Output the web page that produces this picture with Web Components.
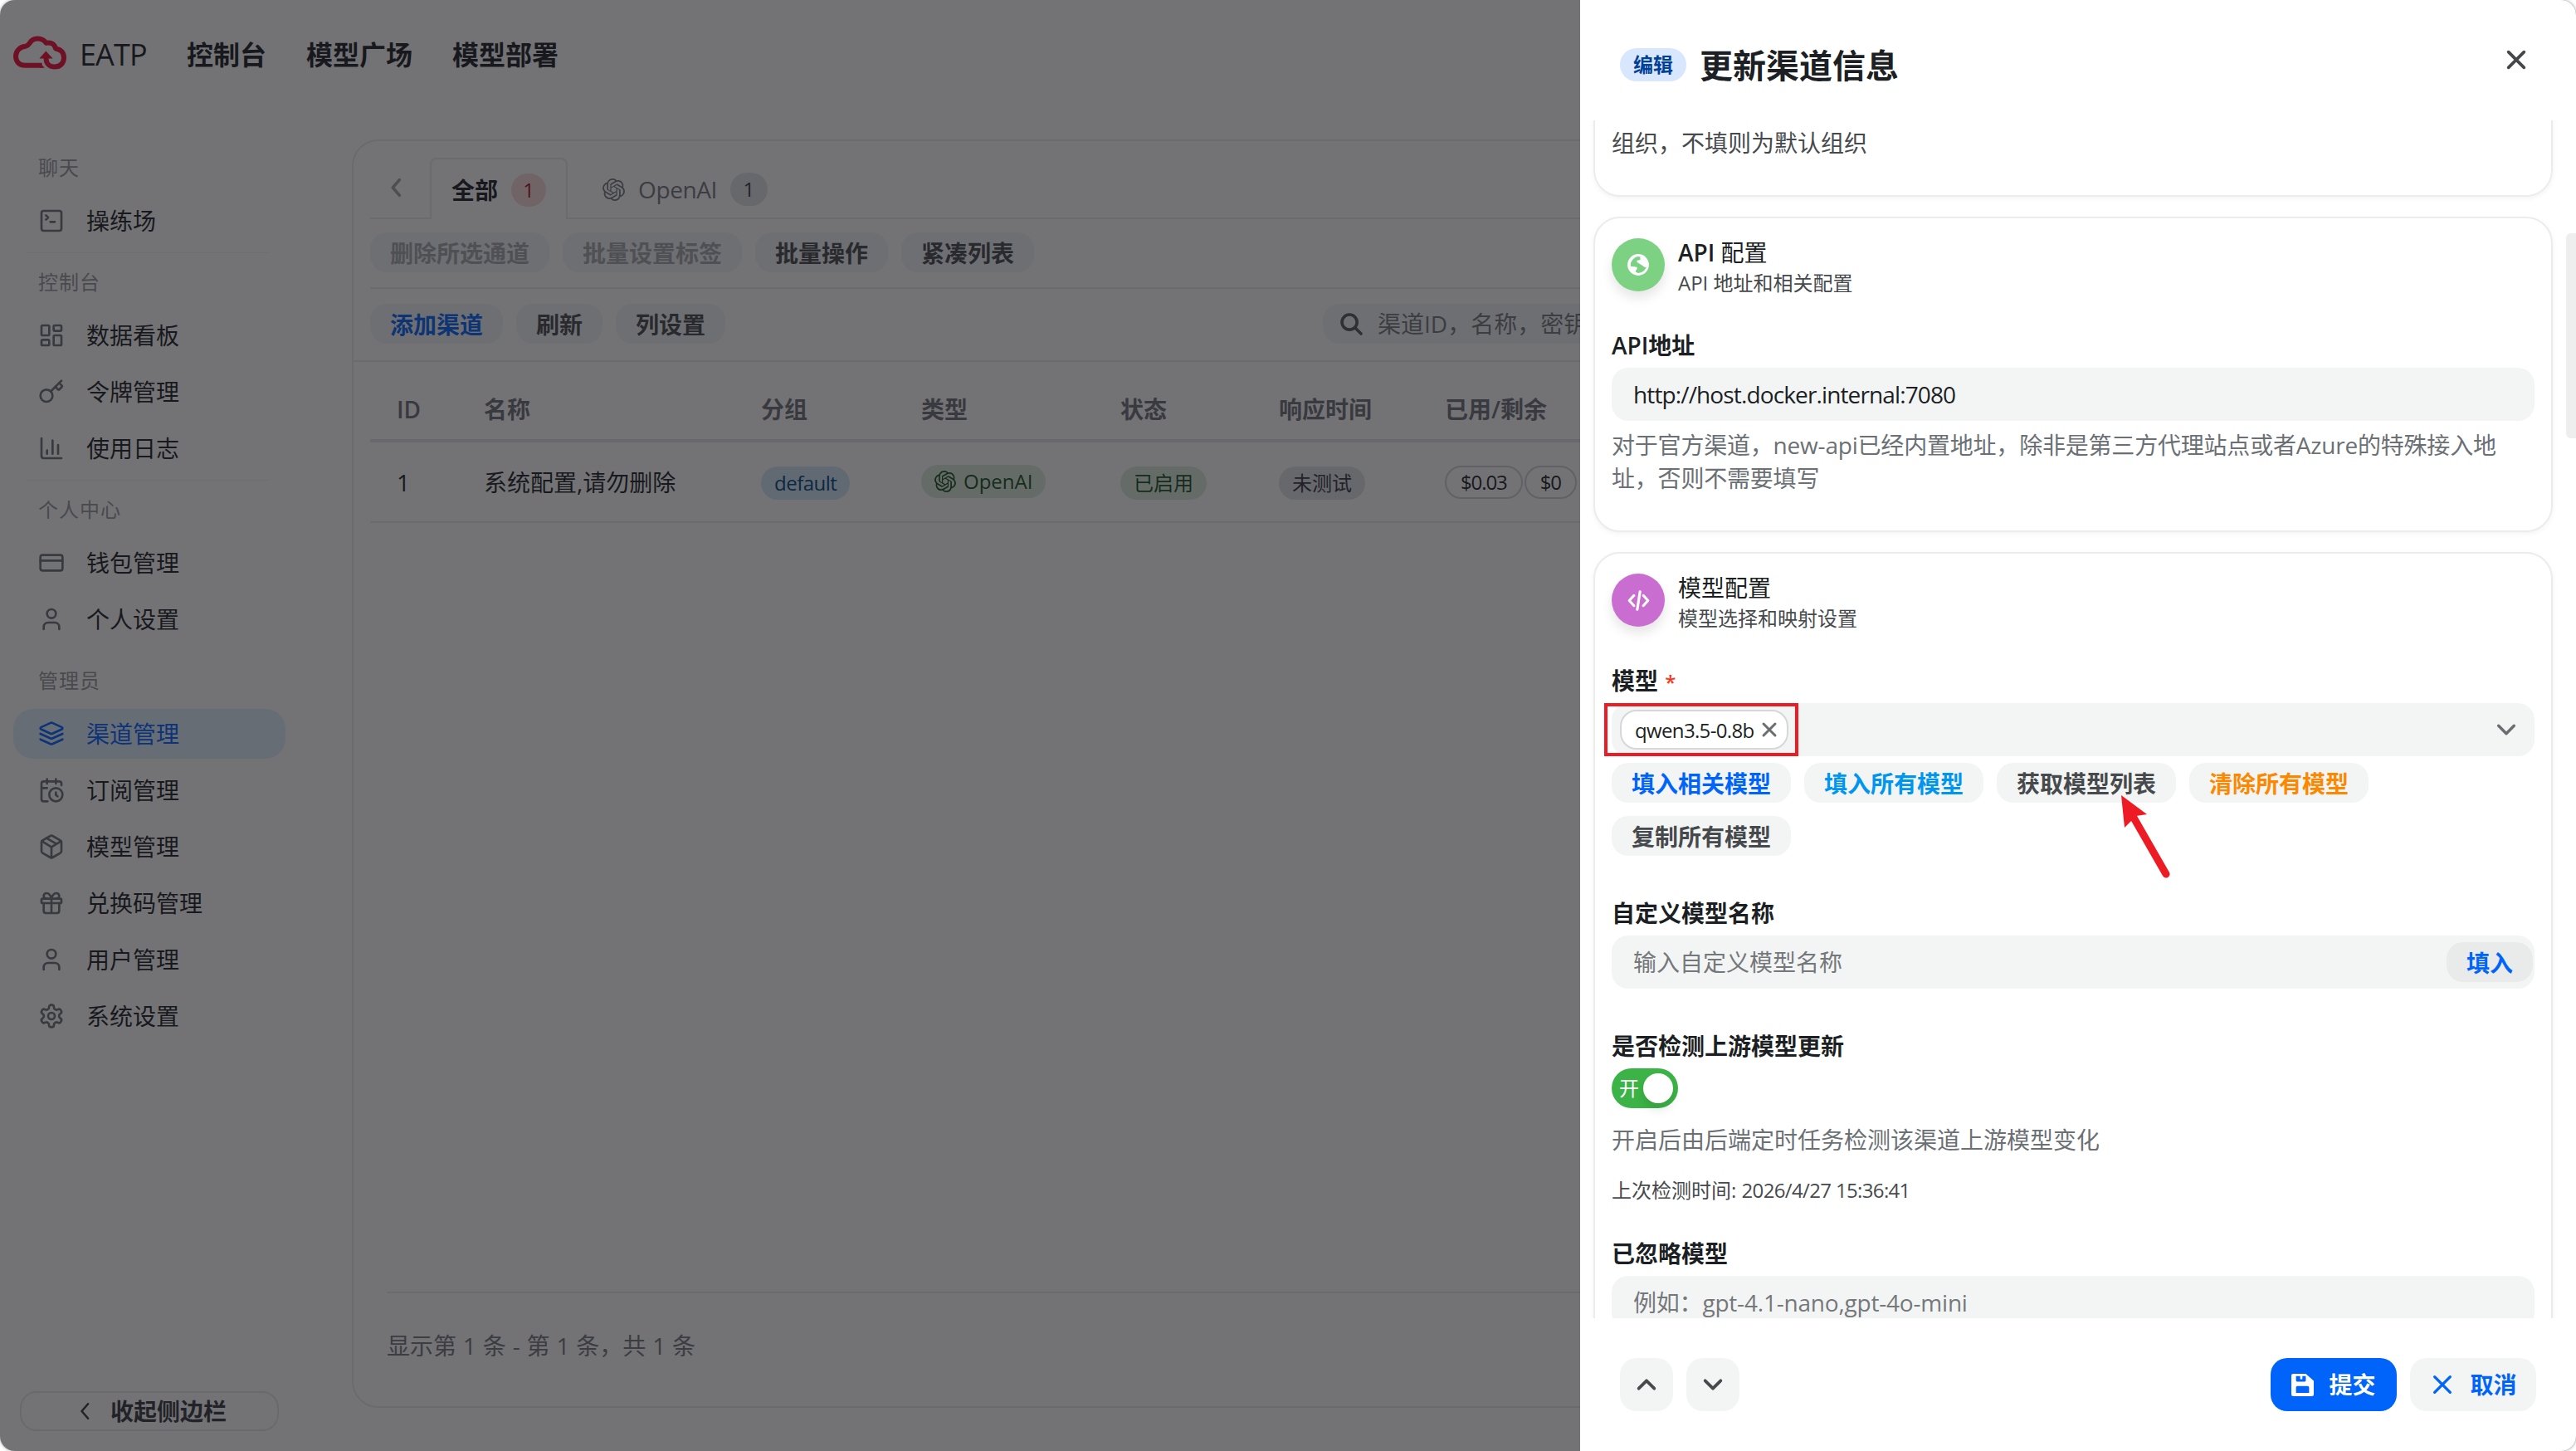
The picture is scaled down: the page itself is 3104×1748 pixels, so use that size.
<!DOCTYPE html>
<html lang="zh-CN">
<head>
<meta charset="utf-8">
<title>EATP</title>
<style>
  html, body {
    margin: 0;
    background: #fff;
  }

  body {
    font-family: "Open Sans", "Noto Sans CJK SC", sans-serif;
    font-size: 28px;
    line-height: 40px;
    color: #1c1f23;
  }
</style>
</head>
<body>
<eatp-app></eatp-app>

<script>
const OPENAI = '<path fill="currentColor" stroke="none" d="M22.2819 9.8211a5.9847 5.9847 0 0 0-.5157-4.9108 6.0462 6.0462 0 0 0-6.5098-2.9A6.0651 6.0651 0 0 0 4.9807 4.1818a5.9847 5.9847 0 0 0-3.9977 2.9 6.0462 6.0462 0 0 0 .7427 7.0966 5.98 5.98 0 0 0 .511 4.9107 6.051 6.051 0 0 0 6.5146 2.9001A5.9847 5.9847 0 0 0 13.2599 24a6.0557 6.0557 0 0 0 5.7718-4.2058 5.9894 5.9894 0 0 0 3.9977-2.9001 6.0557 6.0557 0 0 0-.7475-7.0729zm-9.022 12.6081a4.4755 4.4755 0 0 1-2.8764-1.0408l.1419-.0804 4.7783-2.7582a.7948.7948 0 0 0 .3927-.6813v-6.7369l2.02 1.1686a.071.071 0 0 1 .038.052v5.5826a4.504 4.504 0 0 1-4.4945 4.4944zm-9.6607-4.1254a4.4708 4.4708 0 0 1-.5346-3.0137l.142.0852 4.783 2.7582a.7712.7712 0 0 0 .7806 0l5.8428-3.3685v2.3324a.0804.0804 0 0 1-.0332.0615L9.74 19.9502a4.4992 4.4992 0 0 1-6.1408-1.6464zM2.3408 7.8956a4.485 4.485 0 0 1 2.3655-1.9728V11.6a.7664.7664 0 0 0 .3879.6765l5.8144 3.3543-2.0201 1.1685a.0757.0757 0 0 1-.071 0l-4.8303-2.7865A4.504 4.504 0 0 1 2.3408 7.872zm16.5963 3.8558L13.1038 8.364 15.1192 7.2a.0757.0757 0 0 1 .071 0l4.8303 2.7913a4.4944 4.4944 0 0 1-.6765 8.1042v-5.6772a.79.79 0 0 0-.407-.667zm2.0107-3.0231l-.142-.0852-4.7735-2.7818a.7759.7759 0 0 0-.7854 0L9.409 9.2297V6.8974a.0662.0662 0 0 1 .0284-.0615l4.8303-2.7866a4.4992 4.4992 0 0 1 6.6802 4.66zM8.3065 12.863l-2.02-1.1638a.0804.0804 0 0 1-.038-.0567V6.0742a4.4992 4.4992 0 0 1 7.3757-3.4537l-.142.0805L8.704 5.459a.7948.7948 0 0 0-.3927.6813zm1.0976-2.3654l2.602-1.4998 2.6069 1.4998v2.9994l-2.5974 1.4997-2.6067-1.4997Z"/>';

// 24x24 icons, stroked with currentColor unless they say otherwise
const ICONS = {
  terminal: '<rect x="3" y="3" width="18" height="18" rx="2"/><path d="m7 11 2-2-2-2M11 13h4"/>',
  dashboard: '<rect x="3" y="3" width="7" height="9" rx="1"/><rect x="14" y="3" width="7" height="5" rx="1"/><rect x="14" y="12" width="7" height="9" rx="1"/><rect x="3" y="16" width="7" height="5" rx="1"/>',
  key: '<path d="m15.5 7.5 2.3 2.3a1 1 0 0 0 1.4 0l2.1-2.1a1 1 0 0 0 0-1.4L19 4"/><path d="m21 2-9.6 9.6"/><circle cx="7.5" cy="15.5" r="5.5"/>',
  chart: '<path d="M3 3v16a2 2 0 0 0 2 2h16M18 17V9M13 17V5M8 17v-3"/>',
  card: '<rect x="2" y="5" width="20" height="14" rx="2"/><path d="M2 10h20"/>',
  user: '<path d="M19 21v-2a4 4 0 0 0-4-4H9a4 4 0 0 0-4 4v2"/><circle cx="12" cy="7" r="4"/>',
  layers: '<path d="m12.83 2.18a2 2 0 0 0-1.66 0L2.6 6.08a1 1 0 0 0 0 1.83l8.58 3.91a2 2 0 0 0 1.66 0l8.58-3.9a1 1 0 0 0 0-1.83Z"/><path d="m22 12-9.17 4.17a2 2 0 0 1-1.66 0L2 12M22 17l-9.17 4.17a2 2 0 0 1-1.66 0L2 17"/>',
  calendar: '<path d="M21 7.5V6a2 2 0 0 0-2-2H5a2 2 0 0 0-2 2v14a2 2 0 0 0 2 2h3.500M16 2v4M8 2v4M3 10h5M17.500 17.500 16 16.300V14"/><circle cx="16" cy="16" r="6"/>',
  box: '<path d="M11 21.730a2 2 0 0 0 2 0l7-4A2 2 0 0 0 21 16V8a2 2 0 0 0-1-1.730l-7-4a2 2 0 0 0-2 0l-7 4A2 2 0 0 0 3 8v8a2 2 0 0 0 1 1.730zM12 22V12"/><path d="m3.300 7 7.703 4.734a2 2 0 0 0 1.994 0L20.700 7M7.500 4.270l9 5.150"/>',
  gift: '<rect x="3" y="8" width="18" height="4" rx="1"/><path d="M12 8v13M19 12v7a2 2 0 0 1-2 2H7a2 2 0 0 1-2-2v-7M7.500 8a2.500 2.500 0 0 1 0-5A4.800 8 0 0 1 12 8a4.800 8 0 0 1 4.500-5 2.500 2.500 0 0 1 0 5"/>',
  gear: '<path d="M12.220 2h-.44a2 2 0 0 0-2 2v.18a2 2 0 0 1-1 1.730l-.43.25a2 2 0 0 1-2 0l-.15-.08a2 2 0 0 0-2.730.73l-.22.38a2 2 0 0 0 .73 2.730l.15.1a2 2 0 0 1 1 1.720v.51a2 2 0 0 1-1 1.740l-.15.09a2 2 0 0 0-.73 2.730l.22.38a2 2 0 0 0 2.730.73l.15-.08a2 2 0 0 1 2 0l.43.25a2 2 0 0 1 1 1.730V20a2 2 0 0 0 2 2h.44a2 2 0 0 0 2-2v-.18a2 2 0 0 1 1-1.730l.43-.25a2 2 0 0 1 2 0l.15.08a2 2 0 0 0 2.730-.73l.22-.39a2 2 0 0 0-.73-2.730l-.15-.08a2 2 0 0 1-1-1.740v-.5a2 2 0 0 1 1-1.740l.15-.09a2 2 0 0 0 .73-2.730l-.22-.38a2 2 0 0 0-2.730-.73l-.15.08a2 2 0 0 1-2 0l-.43-.25a2 2 0 0 1-1-1.730V4a2 2 0 0 0-2-2z"/><circle cx="12" cy="12" r="3"/>',
  left: '<path d="M15.500 4.500 9 12l6.500 7.500"/>',
  up: '<path d="m5 15.500 7-7 7 7"/>',
  down: '<path d="m5 8.500 7 7 7-7"/>',
  close: '<path d="m5 5 14 14M19 5 5 19"/>',
  search: '<circle cx="10" cy="10" r="7.500"/><path d="m15.500 15.500 6 6"/>',
  openai: OPENAI,
  code: '<path d="m7 6.500-5 5.500 5 5.500M17 6.500l5 5.500-5 5.500M13.500 2.500l-3 19"/>',
  save: '<path fill="currentColor" stroke="none" fill-rule="evenodd" d="M2 0h13.500L24 7.500V22a2 2 0 0 1-2 2H2a2 2 0 0 1-2-2V2a2 2 0 0 1 2-2zM5 2.500V7a1.500 1.500 0 0 0 1.500 1.500h7.500A1.500 1.500 0 0 0 15.500 7V2.500h-3.700v3.300H9.500V2.500zM6.500 13A1.500 1.500 0 0 0 5 14.500v6h14v-6a1.500 1.500 0 0 0-1.500-1.500z"/>',
  globe: '<circle cx="12" cy="12" r="10.600" stroke-width="2.600"/><path fill="currentColor" stroke="none" d="M13.500 1.500C9 2.500 5 6 3.500 10.500v3.200l5.800.6c1.400.2 1.900 1.400 1.300 2.500l-1.300 1.700c-.6 1.300.5 2 1.700 2.300l.4 1.900A11 11 0 0 1 1.200 12C1.200 5.500 6.500 1 13.500 1.500zM14 3.500l.5 2.200c-.3 1-1.700 1-3 1.300-1.200.4-1.200 1.400-.6 2.200l5.500 3.500c1.500 1.200 2.100 1.900 3.600 2l2.300-1C23 8 19 3 14 3.500z"/>',
};

class UiIcon extends HTMLElement {
  constructor() {
    super();
    this.attachShadow({ mode: "open" });
  }

  connectedCallback() {
    const size = this.getAttribute("size") || 32;
    const stroke = this.getAttribute("stroke") || 2;
    this.shadowRoot.innerHTML = /*html*/`
      <style>
        :host { display: block; flex: none; width: ${size}px; height: ${size}px; }
        svg { display: block; width: 100%; height: 100%; overflow: visible; }
      </style>
      <svg viewBox="0 0 24 24" fill="none" stroke="currentColor" stroke-width="${stroke}"
        stroke-linecap="round" stroke-linejoin="round">${ICONS[this.getAttribute("name")]}</svg>`;
  }
}
customElements.define("ui-icon", UiIcon);

// Registers an element whose shadow root is a plain clone of the markup.
function define(name, html) {
  const template = document.createElement("template");
  template.innerHTML = html;
  customElements.define(name, class extends HTMLElement {
    constructor() {
      super();
      this.attachShadow({ mode: "open" });
      this.shadowRoot.appendChild(template.content.cloneNode(true));
    }
  });
}

define("ui-button", /*html*/`
  <style>
    :host {
      display: flex;
      align-items: center;
      justify-content: center;
      box-sizing: border-box;
      flex: none;
      height: 48px;
      padding: 2px 24px 0;
      border-radius: 20px;
      background: #f3f5f5;
      color: #474a4d;
      font-weight: 700;
      white-space: nowrap;
    }
    :host([color="primary"]) { color: #0064fa; }
    :host([color="secondary"]) { color: #0095ee; }
    :host([color="warning"]) { color: #fc8800; }
    :host([disabled]) { color: #a6a8aa; }
    :host([size="large"]) { height: 64px; width: 152px; padding: 0; gap: 17px; }
    :host([size="square"]) { height: 64px; width: 64px; padding: 0; }
    :host([solid]) { background: #0064fa; color: #fff; gap: 18px; }
  </style>
  <slot></slot>`);

define("ui-tag", /*html*/`
  <style>
    :host {
      display: inline-flex;
      align-items: center;
      box-sizing: border-box;
      height: 40px;
      padding: 0 16px;
      gap: 9px;
      border-radius: 20px;
      font-size: 24px;
      white-space: nowrap;
      background: #e1e3e7;
      color: #35383c;
    }
    :host([color="blue"]) { background: #d3e8f6; color: #00457a; letter-spacing: -0.5px; }
    :host([color="green"]) { background: #dbeddd; color: #174f1f; }
    :host([color="red"]) { background: #fadad7; color: #a80d12; padding: 0; width: 42px; justify-content: center; }
    :host([color="count"]) { padding: 0; width: 45px; justify-content: center; }
    :host([color="outline"]) { background: none; border: 2px solid #d0d2d5; color: #1c1f23; padding: 0 17px; letter-spacing: -1.1px; }
    :host([color="edit"]) { background: #d8e6fe; color: #004097; font-weight: 700; }
  </style>
  <slot></slot>`);

define("top-nav", /*html*/`
  <style>
    :host {
      display: flex;
      align-items: center;
      flex: none;
      height: 132px;
      padding-left: 16px;
      font-size: 32px;
      font-weight: 700;
    }
    svg { width: 64px; height: 41px; margin-top: -6px; }
    .brand { width: 129px; margin-left: 16px; font-size: 36px; font-weight: 500; letter-spacing: -0.9px; }
    nav { display: flex; gap: 48px; }
  </style>
  <svg viewBox="24 37 192 122" fill="none" stroke="#f40a36">
    <path stroke-width="18" stroke-linejoin="round" d="M128 144H66C44 144 33 128 33 111C33 92 47 77 68 75C76 73 79 70 83 64C89 53 99 47 112 47C126 47 136 53 143 63C162 59 174 68 177 83C196 86 207 98 207 116C207 136 193 149 174 149C156 149 143 138 143 122V108"/>
    <path stroke="none" fill="#f40a36" d="M142 92l25 27h-49zM120 135l18 18h-18z"/>
  </svg>
  <div class="brand">EATP</div>
  <nav><span>控制台</span><span>模型广场</span><span>模型部署</span></nav>`);

define("nav-section", /*html*/`
  <style>
    :host { display: block; }
    :host([divided]) { margin-bottom: 17px; }
    :host([divided])::after {
      content: "";
      display: block;
      height: 1px;
      margin: 8px 20px 0 16px;
      background: #f2f2f3;
    }
    :host([spaced]) { margin-bottom: 26px; }
    h4 {
      margin: 0 0 16px 30px;
      font-size: 24px;
      font-weight: 400;
      line-height: 36px;
      letter-spacing: 1px;
      color: #97989a;
    }
    .items { display: flex; flex-direction: column; gap: 8px; }
  </style>
  <h4><slot name="label"></slot></h4>
  <div class="items"><slot></slot></div>`);

define("nav-item", /*html*/`
  <style>
    :host {
      display: flex;
      align-items: center;
      gap: 26px;
      height: 60px;
      padding-left: 30px;
      border-radius: 24px;
    }
    :host([active]) { background: #e1effc; color: #0062ff; }
    ::slotted(ui-icon) { color: #6b7075; }
    :host([active]) ::slotted(ui-icon) { color: #0062ff; }
  </style>
  <slot></slot>`);

define("side-nav", /*html*/`
  <style>
    :host {
      display: flex;
      flex-direction: column;
      box-sizing: border-box;
      flex: none;
      width: 424px;
      padding: 52px 80px 24px 16px;
    }
    .collapse {
      display: flex;
      align-items: center;
      justify-content: center;
      gap: 17px;
      box-sizing: border-box;
      height: 48px;
      margin: auto 8px 0;
      padding-left: 1px;
      border: 2px solid #e8e9ea;
      border-radius: 20px;
      color: #35383c;
      font-weight: 700;
    }
  </style>
  <nav-section divided>
    <span slot="label">聊天</span>
    <nav-item><ui-icon name="terminal"></ui-icon>操练场</nav-item>
  </nav-section>
  <nav-section divided>
    <span slot="label">控制台</span>
    <nav-item><ui-icon name="dashboard"></ui-icon>数据看板</nav-item>
    <nav-item><ui-icon name="key"></ui-icon>令牌管理</nav-item>
    <nav-item><ui-icon name="chart"></ui-icon>使用日志</nav-item>
  </nav-section>
  <nav-section spaced>
    <span slot="label">个人中心</span>
    <nav-item><ui-icon name="card"></ui-icon>钱包管理</nav-item>
    <nav-item><ui-icon name="user"></ui-icon>个人设置</nav-item>
  </nav-section>
  <nav-section>
    <span slot="label">管理员</span>
    <nav-item active><ui-icon name="layers"></ui-icon>渠道管理</nav-item>
    <nav-item><ui-icon name="calendar"></ui-icon>订阅管理</nav-item>
    <nav-item><ui-icon name="box"></ui-icon>模型管理</nav-item>
    <nav-item><ui-icon name="gift"></ui-icon>兑换码管理</nav-item>
    <nav-item><ui-icon name="user"></ui-icon>用户管理</nav-item>
    <nav-item><ui-icon name="gear"></ui-icon>系统设置</nav-item>
  </nav-section>
  <div class="collapse"><ui-icon name="left" size="28" stroke="2.2"></ui-icon>收起侧边栏</div>`);

define("channel-tabs", /*html*/`
  <style>
    :host { display: flex; height: 74px; color: #75787c; }
    div {
      display: flex;
      align-items: center;
      box-sizing: border-box;
      border-bottom: 2px solid #e9eaeb;
    }
    .prev { width: 72px; padding-left: 16px; color: #a0a2a4; }
    .tab { padding: 4px 24px 0 42px; }
    .active {
      padding: 2px 24px 0;
      gap: 16px;
      border: 2px solid #e9eaeb;
      border-bottom: 0;
      border-radius: 8px 8px 0 0;
      color: #1c1f23;
      font-weight: 700;
    }
    .active ui-tag { font-weight: 500; }
    .tab span { margin: 0 16px 0 16px; letter-spacing: -0.4px; }
    .rest { flex: 1; }
  </style>
  <div class="prev"><ui-icon name="left" size="30" stroke="2.8"></ui-icon></div>
  <div class="active">全部<ui-tag color="red">1</ui-tag></div>
  <div class="tab"><ui-icon name="openai" size="27"></ui-icon><span>OpenAI</span><ui-tag color="count">1</ui-tag></div>
  <div class="rest"></div>`);

define("channel-table", /*html*/`
  <style>
    :host { display: block; margin: 20px 0 0 20px; }
    .row {
      display: grid;
      grid-template-columns: 105px 334px 193px 240px 191px 200px 1fr;
      align-items: center;
      height: 95px;
      border-bottom: 2px solid #e9eaeb;
    }
    .row > * { padding-left: 32px; white-space: nowrap; }
    .head {
      height: 73px;
      border-bottom: 4px solid #e6e7e8;
      color: #6f7275;
      font-weight: 600;
    }
    .quota { display: flex; gap: 2px; }
  </style>
  <div class="row head">
    <span>ID</span><span>名称</span><span>分组</span><span>类型</span><span>状态</span><span>响应时间</span><span>已用/剩余</span>
  </div>
  <div class="row">
    <span>1</span>
    <span>系统配置,请勿删除</span>
    <span><ui-tag color="blue">default</ui-tag></span>
    <span><ui-tag color="green"><ui-icon name="openai" size="26"></ui-icon>OpenAI</ui-tag></span>
    <span><ui-tag color="green">已启用</ui-tag></span>
    <span><ui-tag>未测试</ui-tag></span>
    <span class="quota"><ui-tag color="outline">$0.03</ui-tag><ui-tag color="outline">$0</ui-tag></span>
  </div>`);

define("channel-card", /*html*/`
  <style>
    :host {
      display: flex;
      flex-direction: column;
      box-sizing: border-box;
      flex: 1;
      margin: 36px 16px 52px 0;
      border: 2px solid #e9eaeb;
      border-radius: 32px;
    }
    channel-tabs { margin: 20px 20px 0; }
    .bar { display: flex; gap: 16px; margin: 0 20px; }
    .batch { padding: 16px 0 18px; border-bottom: 2px solid #e9eaeb; }
    .tools { padding: 18px 0 20px; }
    .tools + hr { width: 100%; height: 2px; margin: 0; border: 0; background: #e9eaeb; }
    .search {
      display: flex;
      align-items: center;
      gap: 17px;
      width: 560px;
      height: 48px;
      margin-left: 704px;
      padding-left: 20px;
      border-radius: 20px;
      background: #f3f5f5;
      color: #75787c;
    }
    .search ui-icon { color: #54575a; }
    footer {
      height: 126px;
      padding-bottom: 10px;
      margin: auto 40px 0;
      border-top: 2px solid #e9eaeb;
      line-height: 126px;
      word-spacing: 0.6px;
      color: #75787b;
    }
  </style>
  <channel-tabs></channel-tabs>
  <div class="bar batch">
    <ui-button disabled>删除所选通道</ui-button>
    <ui-button disabled>批量设置标签</ui-button>
    <ui-button>批量操作</ui-button>
    <ui-button>紧凑列表</ui-button>
  </div>
  <div class="bar tools">
    <ui-button color="primary">添加渠道</ui-button>
    <ui-button>刷新</ui-button>
    <ui-button>列设置</ui-button>
    <div class="search"><ui-icon name="search" size="29" stroke="3"></ui-icon>渠道ID，名称，密钥</div>
  </div>
  <hr>
  <channel-table></channel-table>
  <footer>显示第 1 条 - 第 1 条，共 1 条</footer>`);

define("form-card", /*html*/`
  <style>
    :host {
      display: block;
      box-sizing: border-box;
      flex: none;
      padding: 24px 20px;
      border: 2px solid #ebecec;
      border-radius: 32px;
      box-shadow: 0 2px 6px rgba(0, 0, 0, .05);
      background: #fff;
    }
    header { display: flex; gap: 16px; height: 64px; }
    .avatar {
      display: flex;
      align-items: center;
      justify-content: center;
      width: 64px;
      height: 64px;
      border-radius: 50%;
      background: var(--avatar);
      color: #fff;
      box-shadow: 0 8px 14px rgba(0, 0, 0, .1);
    }
    .title { margin-top: -3px; }
    .note { margin-top: -1px; font-size: 24px; line-height: 36px; color: #474a4d; }
  </style>
  <header>
    <div class="avatar"><slot name="icon"></slot></div>
    <div>
      <div class="title"><slot name="title"></slot></div>
      <div class="note"><slot name="note"></slot></div>
    </div>
  </header>
  <slot></slot>`);

define("form-field", /*html*/`
  <style>
    :host { display: block; }
    label { display: block; height: 40px; margin-bottom: 7px; font-weight: 600; }
    :host([required]) label::after { content: " *"; font-size: 24px; line-height: 1; color: #f93920; white-space: pre; margin-left: 2px; }
    .help { color: #6b7075; }
  </style>
  <label><slot name="label"></slot></label>
  <slot></slot>
  <div class="help"><slot name="help"></slot></div>`);

define("text-box", /*html*/`
  <style>
    :host {
      display: flex;
      align-items: center;
      justify-content: space-between;
      box-sizing: border-box;
      height: 64px;
      padding: 0 2px 0 26px;
      border-radius: 20px;
      background: #f3f5f5;
    }
    :host([placeholder]) { color: #75787a; }
    ::slotted(ui-button) { background: #e9ebeb; }
  </style>
  <slot></slot>`);

define("model-select", /*html*/`
  <style>
    :host {
      display: flex;
      align-items: center;
      justify-content: space-between;
      position: relative;
      box-sizing: border-box;
      height: 64px;
      padding: 0 18px 0 10px;
      border-radius: 20px;
      background: #f3f5f5;
      color: #6b6e71;
    }
    .tag {
      display: flex;
      align-items: center;
      box-sizing: border-box;
      width: 203px;
      height: 48px;
      padding: 0 9px 0 16px;
      justify-content: space-between;
      border: 2px solid #d5d7da;
      border-radius: 20px;
      background: #fff;
      font-size: 24px;
    }
    .tag span { padding-top: 2px; color: #1c1f23; letter-spacing: -0.65px; }
    /* annotation frame round the selected model */
    .frame {
      position: absolute;
      left: -9px;
      top: 0;
      box-sizing: border-box;
      width: 234px;
      height: 64px;
      border: 4px solid #ed1c24;
    }
  </style>
  <div class="tag"><span>qwen3.5-0.8b</span><ui-icon name="close" size="24" stroke="3"></ui-icon></div>
  <ui-icon name="down" stroke="2.6"></ui-icon>
  <div class="frame"></div>`);

define("ui-switch", /*html*/`
  <style>
    :host {
      display: flex;
      align-items: center;
      justify-content: space-between;
      box-sizing: border-box;
      width: 80px;
      height: 48px;
      padding: 0 6px 0 9px;
      border-radius: 24px;
      background: #3bb346;
      color: #fff;
      font-size: 24px;
    }
    i {
      width: 36px;
      height: 36px;
      border-radius: 50%;
      background: #fff;
      box-shadow: 0 8px 12px rgba(0, 0, 0, .1);
    }
  </style>
  <span><slot></slot></span><i></i>`);

define("model-actions", /*html*/`
  <style>
    :host { display: flex; flex-wrap: wrap; gap: 16px; position: relative; margin-top: 8px; }
    svg { position: absolute; left: 612px; top: 37px; width: 64px; height: 104px; }
  </style>
  <ui-button color="primary">填入相关模型</ui-button>
  <ui-button color="secondary">填入所有模型</ui-button>
  <ui-button>获取模型列表</ui-button>
  <ui-button color="warning">清除所有模型</ui-button>
  <ui-button>复制所有模型</ui-button>
  <svg viewBox="0 0 64 104">
    <path d="M2 2 33 25 20 27 6 41z" fill="#ed1c24"/>
    <path d="M17 29 56 97" stroke="#ed1c24" stroke-width="9" stroke-linecap="round"/>
  </svg>`);

define("channel-drawer", /*html*/`
  <style>
    :host { display: flex; flex-direction: column; background: #fff; }
    header {
      display: flex;
      align-items: center;
      box-sizing: border-box;
      flex: none;
      height: 145px;
      padding: 10px 56px 0 48px;
    }
    h3 { flex: 1; margin: 3px 0 0 16px; font-size: 40px; line-height: 56px; }
    header ui-icon { margin-bottom: 12px; color: #45484b; }
    .body { display: flex; flex: 1; min-height: 0; overflow: hidden; }
    .cards { display: flex; flex-direction: column; flex: 1; gap: 24px; padding: 0 12px 0 16px; }
    .tail {
      box-sizing: border-box;
      flex: none;
      height: 132px;
      margin-top: -40px;
      padding: 45px 20px 0;
      border: 2px solid #ebecec;
      border-radius: 32px;
      box-shadow: 0 2px 6px rgba(0, 0, 0, .05);
      color: #474a4d;
    }
    .api { height: 380px; --avatar: #7dd182; }
    .model { height: 1100px; --avatar: #c96dd1; }
    .first { margin-top: 45px; }
    .next { margin-top: 49px; }
    .hint { margin-top: 9px; letter-spacing: -0.2px; }
    b { font-weight: 600; }
    .url { letter-spacing: -0.87px; }
    .latin { letter-spacing: -0.65px; }
    .scroll { flex: none; width: 12px; height: 247px; margin: 136px 0 0 4px; border-radius: 6px 0 0 6px; background: #eeeeef; }
    .checked { margin: 21px 0 36px; font-size: 24px; color: #474a4d; }
    footer {
      display: flex;
      align-items: center;
      box-sizing: border-box;
      flex: none;
      height: 160px;
      padding: 0 48px;
      gap: 16px;
    }
    footer span { flex: 1; }
  </style>
  <header>
    <ui-tag color="edit">编辑</ui-tag>
    <h3>更新渠道信息</h3>
    <ui-icon name="close" size="32" stroke="2.8"></ui-icon>
  </header>
  <div class="body">
    <div class="cards">
      <div class="tail">组织，不填则为默认组织</div>
      <form-card class="api">
        <ui-icon slot="icon" name="globe" size="26"></ui-icon>
        <span slot="title"><b>API</b> 配置</span>
        <span slot="note">API 地址和相关配置</span>
        <form-field class="first">
          <span slot="label">API地址</span>
          <text-box class="url">http://host.docker.internal:7080</text-box>
          <div slot="help" class="hint">对于官方渠道，new-api已经内置地址，除非是第三方代理站点或者Azure的特殊接入地址，否则不需要填写</div>
        </form-field>
      </form-card>
      <form-card class="model">
        <ui-icon slot="icon" name="code" size="27" stroke="2.8"></ui-icon>
        <span slot="title">模型配置</span>
        <span slot="note">模型选择和映射设置</span>
        <form-field required class="first">
          <span slot="label">模型</span>
          <model-select></model-select>
          <model-actions slot="help"></model-actions>
        </form-field>
        <form-field class="next">
          <span slot="label">自定义模型名称</span>
          <text-box placeholder>输入自定义模型名称<ui-button color="primary">填入</ui-button></text-box>
        </form-field>
        <form-field class="next">
          <span slot="label">是否检测上游模型更新</span>
          <ui-switch>开</ui-switch>
          <div slot="help" style="margin-top: 18px">开启后由后端定时任务检测该渠道上游模型变化</div>
        </form-field>
        <div class="checked">上次检测时间: <span class="latin">2026/4/27 15:36:41</span></div>
        <form-field>
          <span slot="label">已忽略模型</span>
          <text-box placeholder style="letter-spacing: -0.2px">例如：gpt-4.1-nano,gpt-4o-mini</text-box>
        </form-field>
      </form-card>
    </div>
    <div class="scroll"></div>
  </div>
  <footer>
    <ui-button size="square"><ui-icon name="up" stroke="2.8"></ui-icon></ui-button>
    <ui-button size="square"><ui-icon name="down" stroke="2.8"></ui-icon></ui-button>
    <span></span>
    <ui-button size="large" solid><ui-icon name="save" size="27"></ui-icon>提交</ui-button>
    <ui-button size="large" color="primary"><ui-icon name="close" size="32" stroke="2.5"></ui-icon>取消</ui-button>
  </footer>`);

define("eatp-app", /*html*/`
  <style>
    :host {
      display: flex;
      flex-direction: column;
      position: relative;
      box-sizing: border-box;
      width: 3104px;
      height: 1748px;
      overflow: hidden;
      border-radius: 18px;
      background: #fff;
      box-shadow: 0 0 3px 1px #c4c4c4;
    }
    main { display: flex; flex: 1; min-height: 0; }
    .mask { position: absolute; inset: 0; background: rgba(22, 22, 26, .6); }
    channel-drawer { position: absolute; top: 0; right: 0; bottom: 0; width: 1200px; }
  </style>
  <top-nav></top-nav>
  <main>
    <side-nav></side-nav>
    <channel-card></channel-card>
  </main>
  <div class="mask"></div>
  <channel-drawer></channel-drawer>`);
</script>
</body>
</html>
